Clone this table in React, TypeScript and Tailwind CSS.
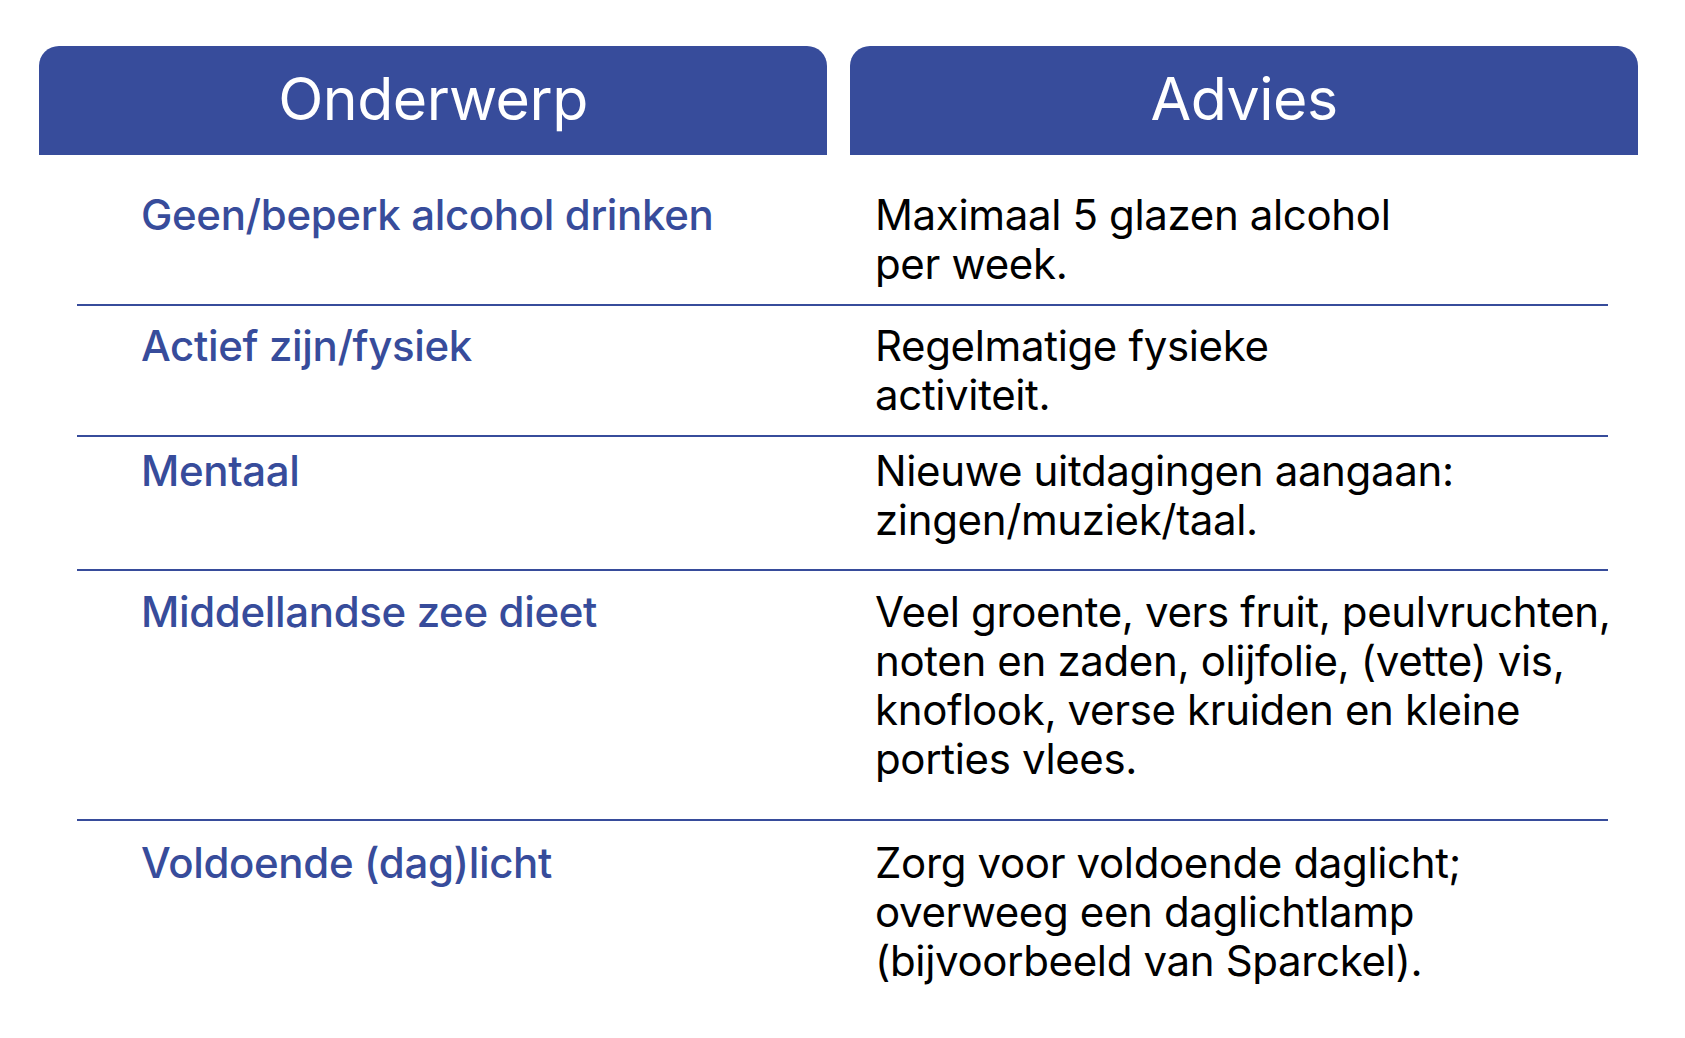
import React from "react";

type Row = {
  topic: string;
  advice: string[];
  pad: string;
};

const rows: Row[] = [
  { topic: "Geen/beperk alcohol drinken", advice: ["Maximaal 5 glazen alcohol", "per week."], pad: "pt-[35px] pb-[16px]" },
  { topic: "Actief zijn/fysiek", advice: ["Regelmatige fysieke", "activiteit."], pad: "pt-[15px] pb-[16px]" },
  { topic: "Mentaal", advice: ["Nieuwe uitdagingen aangaan:", "zingen/muziek/taal."], pad: "pt-[9px] pb-[25px]" },
  {
    topic: "Middellandse zee dieet",
    advice: [
      "Veel groente, vers fruit, peulvruchten,",
      "noten en zaden, olijfolie, (vette) vis,",
      "knoflook, verse kruiden en kleine",
      "porties vlees.",
    ],
    pad: "pt-[16px] pb-[36px]",
  },
  {
    topic: "Voldoende (dag)licht",
    advice: ["Zorg voor voldoende daglicht;", "overweeg een daglichtlamp", "(bijvoorbeeld van Sparckel)."],
    pad: "pt-[17px] pb-[20px]",
  },
];

function HeaderCell({ label }: { label: string }) {
  return (
    <div className="flex h-[109px] w-[788px] items-center justify-center rounded-t-[20px] bg-[#374c9b] pb-[4px]">
      <span className="text-[59px] leading-none font-normal tracking-[-0.5px] text-white">{label}</span>
    </div>
  );
}

export default function App() {
  return (
    <div className="min-h-[1038px] w-full bg-white pt-[46px] font-['Inter','Liberation_Sans',sans-serif]">
      <div className="ml-[39px] flex gap-[23px]">
        <HeaderCell label="Onderwerp" />
        <HeaderCell label="Advies" />
      </div>

      <div className="ml-[77px] w-[1531px]">
        {rows.map((row, index) => (
          <div key={row.topic}>
            <div className={`grid grid-cols-[798px_1fr] text-[42px] leading-[49px] tracking-[-0.35px] ${row.pad}`}>
              <div className="pl-[64px] font-medium text-[#374c9b] whitespace-nowrap">{row.topic}</div>
              <div className="font-normal text-black whitespace-nowrap">
                {row.advice.map((line) => (
                  <div key={line}>{line}</div>
                ))}
              </div>
            </div>
            {index < rows.length - 1 && <div className="h-[2px] bg-[#374c9b]" />}
          </div>
        ))}
      </div>
    </div>
  );
}
